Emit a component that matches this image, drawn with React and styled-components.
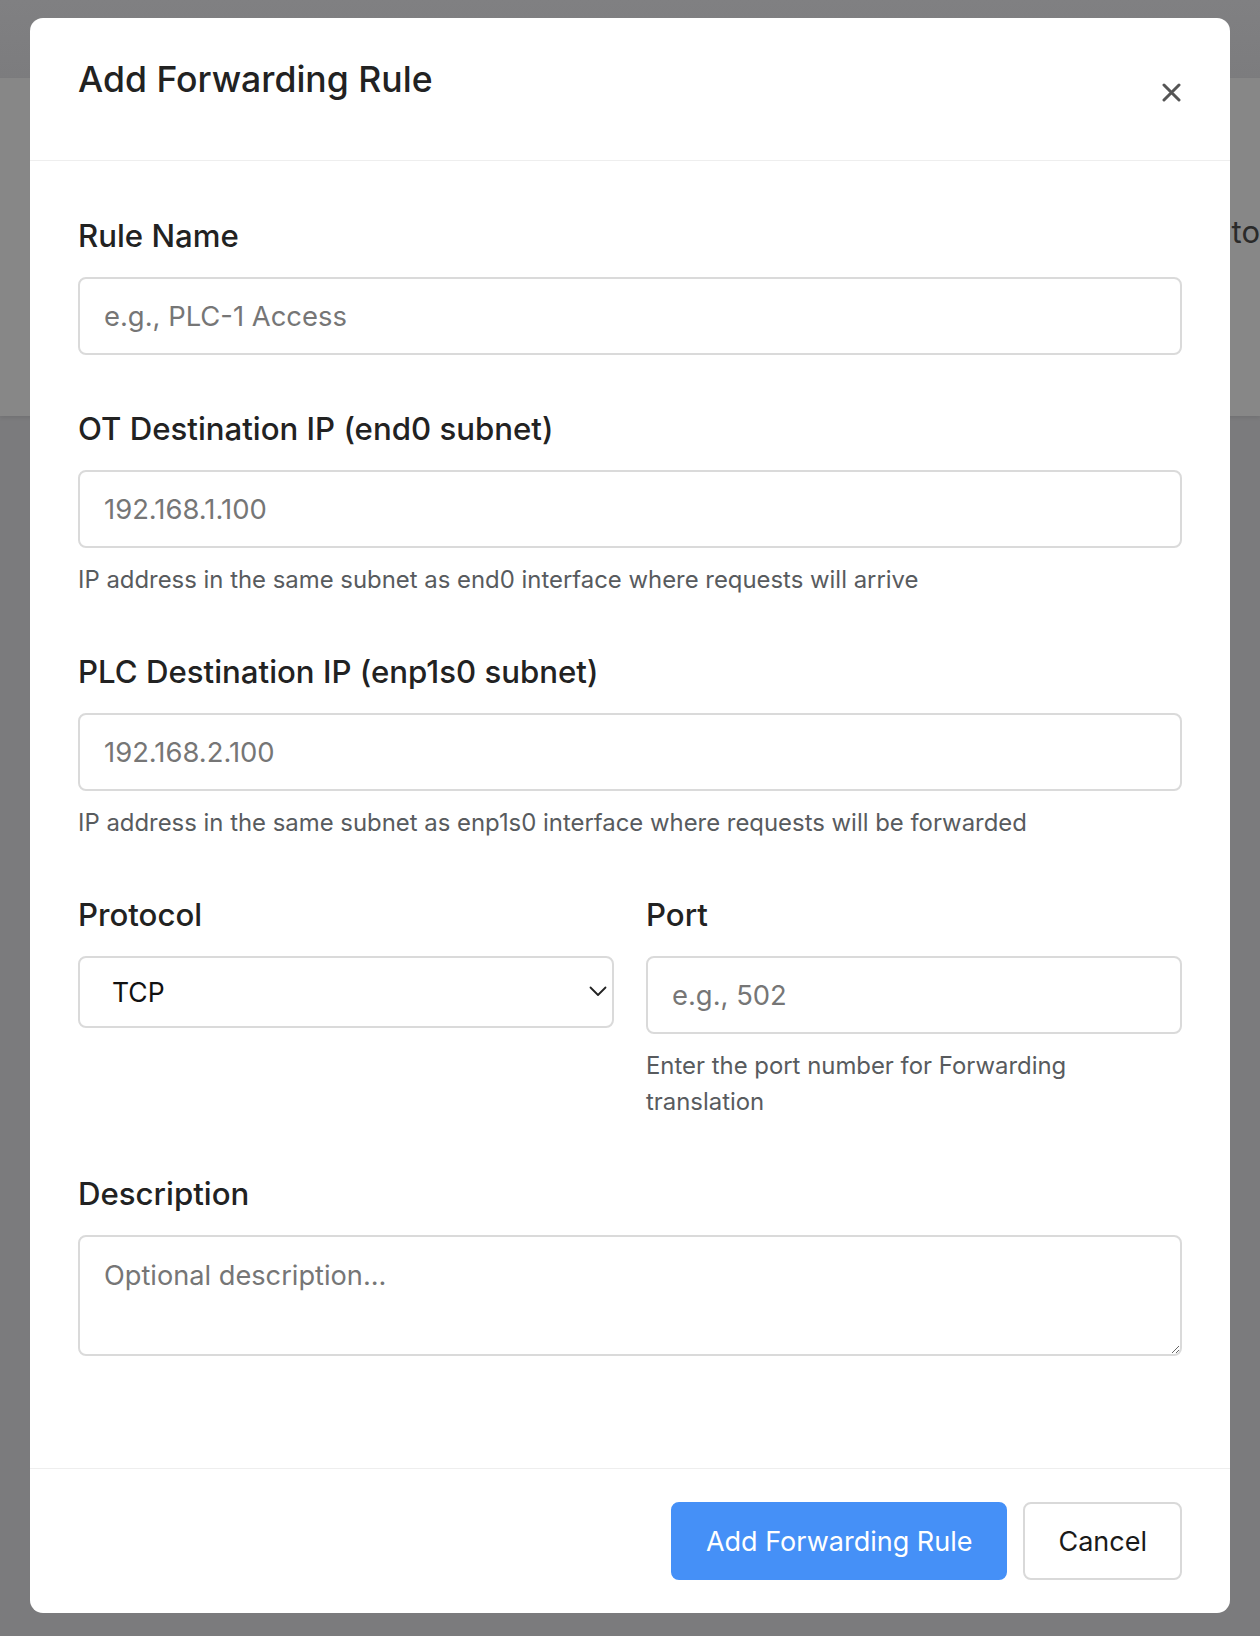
import React from 'react';
import styled, { createGlobalStyle } from 'styled-components';

const GlobalStyle = createGlobalStyle`
  * { box-sizing: border-box; }
  html, body {
    margin: 0;
    padding: 0;
    background: #7b7b7d;
    font-family: Inter, "Noto Sans", "Liberation Sans", sans-serif;
    color: #212529;
  }
`;

const Page = styled.div`
  position: relative;
  width: 1260px;
  height: 1636px;
  overflow: hidden;
`;

const TopBar = styled.div`
  height: 78px;
  background: linear-gradient(#808082, #7c7c7e);
`;

const HeroCard = styled.div`
  height: 338px;
  background: #878787;
  box-shadow: 0 2px 4px rgba(0, 0, 0, 0.08);
  display: flex;
  justify-content: flex-end;
  padding-top: 131px;
  font-size: 31px;
  line-height: 45px;
  color: #2a2a2a;
  white-space: nowrap;
`;

const Overlay = styled.div`
  position: absolute;
  inset: 0;
  display: flex;
  justify-content: center;
  align-items: flex-start;
  padding-top: 18px;
`;

const Modal = styled.div`
  width: 1200px;
  height: 1595px;
  background: #fff;
  border-radius: 13px;
  display: flex;
  flex-direction: column;
  overflow: hidden;
`;

const Header = styled.div`
  height: 143px;
  padding: 34px 48px 0;
  border-bottom: 1px solid #eeeeee;
  display: flex;
  justify-content: space-between;
  align-items: flex-start;
`;

const Title = styled.h5`
  margin: 0;
  font-size: 35.6px;
  font-weight: 500;
  line-height: 56px;
  color: #222;
`;

const CloseButton = styled.button`
  margin-top: 20px;
  margin-right: -9px;
  width: 40px;
  height: 40px;
  border: 0;
  background: transparent;
  padding: 0;
  display: flex;
  align-items: center;
  justify-content: center;
  color: #555;
  cursor: pointer;
`;

const Body = styled.div`
  flex: 1;
  padding: 51px 48px 0;
  display: flex;
  flex-direction: column;
  gap: 50px;
`;

const Field = styled.div`
  display: flex;
  flex-direction: column;
  min-width: 0;
`;

const Row = styled.div`
  display: grid;
  grid-template-columns: 1fr 1fr;
  column-gap: 32px;
  align-items: start;
`;

const Label = styled.label`
  font-size: 31.2px;
  font-weight: 500;
  line-height: 48px;
  margin-bottom: 17px;
  color: #222;
`;

const Input = styled.input`
  height: 78px;
  width: 100%;
  border: 2px solid #dadada;
  border-radius: 8px;
  padding: 0 24px;
  font-family: inherit;
  font-size: 27.4px;
  color: #212529;
  background: #fff;
  outline: none;

  &::placeholder {
    color: #767676;
  }
`;

const SelectWrap = styled.div`
  position: relative;
`;

const Select = styled.select`
  appearance: none;
  -webkit-appearance: none;
  width: 100%;
  height: 72px;
  border: 2px solid #dadada;
  border-radius: 8px;
  padding: 0 32px;
  font-family: inherit;
  font-size: 26.5px;
  color: #111;
  background: #fff;
  outline: none;
`;

const Chevron = styled.svg`
  position: absolute;
  right: 7px;
  top: 30px;
  pointer-events: none;
`;

const TextArea = styled.textarea`
  height: 121px;
  width: 100%;
  border: 2px solid #dadada;
  border-radius: 8px;
  padding: 18px 24px;
  font-family: inherit;
  font-size: 27.2px;
  line-height: 42px;
  color: #212529;
  resize: vertical;
  outline: none;

  &::placeholder {
    color: #767676;
  }
`;

const Help = styled.div`
  margin-top: 14px;
  font-size: 23.9px;
  line-height: 36px;
  color: #585b5e;
`;

const Footer = styled.div`
  height: 145px;
  border-top: 1px solid #eeeeee;
  padding: 0 48px;
  display: flex;
  justify-content: flex-end;
  align-items: center;
  gap: 16px;
`;

const Button = styled.button`
  height: 78px;
  padding: 0 33px;
  border-radius: 8px;
  font-family: inherit;
  font-size: 27px;
  cursor: pointer;
  border: 2px solid ${p => (p.$primary ? '#4590f7' : '#d9d9d9')};
  background: ${p => (p.$primary ? '#4590f7' : '#fff')};
  color: ${p => (p.$primary ? '#fff' : '#1a1a1a')};
`;

function App() {
  return (
    <Page>
      <GlobalStyle />
      <TopBar />
      <HeroCard>
        <span>Forward requests from the OT network to</span>
      </HeroCard>
      <Overlay>
        <Modal>
          <Header>
            <Title>Add Forwarding Rule</Title>
            <CloseButton aria-label="Close">
              <svg width="19" height="19" viewBox="0 0 19 19">
                <path
                  d="M2 2 L17 17 M17 2 L2 17"
                  stroke="currentColor"
                  strokeWidth="3"
                  strokeLinecap="round"
                />
              </svg>
            </CloseButton>
          </Header>
          <Body>
            <Field>
              <Label>Rule Name</Label>
              <Input placeholder="e.g., PLC-1 Access" />
            </Field>
            <Field>
              <Label>OT Destination IP (end0 subnet)</Label>
              <Input placeholder="192.168.1.100" />
              <Help>
                IP address in the same subnet as end0 interface where requests
                will arrive
              </Help>
            </Field>
            <Field>
              <Label>PLC Destination IP (enp1s0 subnet)</Label>
              <Input placeholder="192.168.2.100" />
              <Help>
                IP address in the same subnet as enp1s0 interface where requests
                will be forwarded
              </Help>
            </Field>
            <Row>
              <Field>
                <Label>Protocol</Label>
                <SelectWrap>
                  <Select defaultValue="tcp">
                    <option value="tcp">TCP</option>
                    <option value="udp">UDP</option>
                  </Select>
                  <Chevron width="18" height="11" viewBox="0 0 18 11">
                    <path
                      d="M1.5 1.5 L9 9 L16.5 1.5"
                      fill="none"
                      stroke="#222"
                      strokeWidth="1.8"
                      strokeLinecap="round"
                      strokeLinejoin="round"
                    />
                  </Chevron>
                </SelectWrap>
              </Field>
              <Field>
                <Label>Port</Label>
                <Input placeholder="e.g., 502" />
                <Help>Enter the port number for Forwarding translation</Help>
              </Field>
            </Row>
            <Field>
              <Label>Description</Label>
              <TextArea placeholder="Optional description..." />
            </Field>
          </Body>
          <Footer>
            <Button $primary>Add Forwarding Rule</Button>
            <Button>Cancel</Button>
          </Footer>
        </Modal>
      </Overlay>
    </Page>
  );
}

export default App;
